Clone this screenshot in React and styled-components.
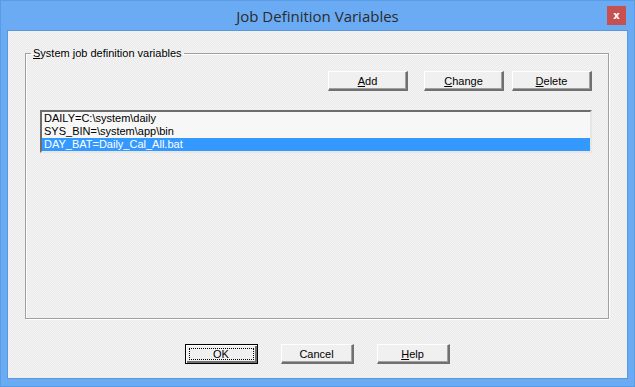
import React from 'react';
import styled, { createGlobalStyle } from 'styled-components';

const VARIABLES = [
  { id: 'daily', text: 'DAILY=C:\\system\\daily' },
  { id: 'sysbin', text: 'SYS_BIN=\\system\\app\\bin' },
  { id: 'daybat', text: 'DAY_BAT=Daily_Cal_All.bat', selected: true },
];

const GlobalStyle = createGlobalStyle`
  html, body {
    margin: 0;
    padding: 0;
    background: #6aabf4;
  }
`;

const Window = styled.div`
  width: 635px;
  height: 387px;
  box-sizing: border-box;
  display: flex;
  flex-direction: column;
  background: #6aabf4;
  border: 1px solid #5a9be6;
  font-family: "Liberation Sans", Arial, sans-serif;
  font-size: 11px;
  color: #000;
`;

const TitleBar = styled.div`
  height: 29px;
  display: flex;
  align-items: center;
  justify-content: center;
  position: relative;
`;

const Title = styled.span`
  font-family: "Open Sans", "Noto Sans", sans-serif;
  font-size: 15px;
  color: #2b2b2b;
  margin-top: 1px;
`;

const CloseButton = styled.div`
  position: absolute;
  right: 8px;
  top: 5px;
  width: 19px;
  height: 19px;
  background: #c75050;
  color: #fff;
  font-family: "DejaVu Sans", sans-serif;
  font-weight: bold;
  font-size: 10px;
  display: flex;
  align-items: center;
  justify-content: center;
`;

const Client = styled.div`
  flex: 1;
  margin: 0 6px 7px 6px;
  border: 1px solid #5b97dc;
  background: repeating-conic-gradient(#f3f3f3 0 25%, #ebebeb 0 50%) 0 0 / 2px 2px;
  display: flex;
  flex-direction: column;
  padding: 16px 18px 0 17px;
`;

const Group = styled.fieldset`
  margin: 0;
  padding: 12px 16px 21px 14px;
  border: 1px solid #a0a0a0;
  box-shadow: 1px 1px 0 #fff, inset 1px 1px 0 #fff;
  height: 272px;
  box-sizing: border-box;
  display: flex;
  flex-direction: column;
`;

const Legend = styled.legend`
  padding: 0 2px;
  margin-left: -9px;
  line-height: 12px;
`;

const Key = styled.span`
  text-decoration: underline;
`;

const ButtonBar = styled.div`
  display: flex;
  justify-content: flex-end;
  gap: 8px;
  margin-bottom: 19px;
`;

const Button = styled.div`
  width: ${p => p.w || 80}px;
  height: 20px;
  box-sizing: border-box;
  display: flex;
  align-items: center;
  justify-content: center;
  background: #f0f0f0;
  border-top: 1px solid #fff;
  border-left: 1px solid #fff;
  border-right: 2px solid #707070;
  border-bottom: 2px solid #707070;
  box-shadow: inset -1px -1px 0 #a0a0a0;
  margin-left: ${p => p.ml || 0}px;
`;

const DefaultButton = styled(Button)`
  border: 1px solid #000;
  box-shadow: inset 1px 1px 0 #fff, inset -2px -2px 0 #707070;
  padding: 3px;
`;

const Focus = styled.div`
  flex: 1;
  align-self: stretch;
  border: 1px dotted #000;
  display: flex;
  align-items: center;
  justify-content: center;
`;

const ListBox = styled.div`
  flex: 1;
  background: #f7f7f7;
  border-top: 2px solid #6d6d6d;
  border-left: 2px solid #6d6d6d;
  border-right: 2px solid #e6e6e6;
  border-bottom: 2px solid #e6e6e6;
`;

const Row = styled.div`
  height: 13px;
  line-height: 13px;
  padding-left: 2px;
  white-space: pre;
  background: ${p => (p.selected ? '#3399ff' : 'transparent')};
  color: ${p => (p.selected ? '#fff' : '#000')};
`;

const Footer = styled.div`
  display: flex;
  justify-content: center;
  gap: 23px;
  margin-top: 25px;
`;

const App = () => (
  <>
    <GlobalStyle />
    <Window>
      <TitleBar>
        <Title>Job Definition Variables</Title>
        <CloseButton>x</CloseButton>
      </TitleBar>
      <Client>
        <Group>
          <Legend><Key>S</Key>ystem job definition variables</Legend>
          <ButtonBar>
            <Button><Key>A</Key>dd</Button>
            <Button ml={8}><Key>C</Key>hange</Button>
            <Button><Key>D</Key>elete</Button>
          </ButtonBar>
          <ListBox>
            {VARIABLES.map(v => (
              <Row key={v.id} selected={v.selected}>{v.text}</Row>
            ))}
          </ListBox>
        </Group>
        <Footer>
          <DefaultButton w={73}><Focus>OK</Focus></DefaultButton>
          <Button w={73}>Cancel</Button>
          <Button w={73}><Key>H</Key>elp</Button>
        </Footer>
      </Client>
    </Window>
  </>
);

export default App;
